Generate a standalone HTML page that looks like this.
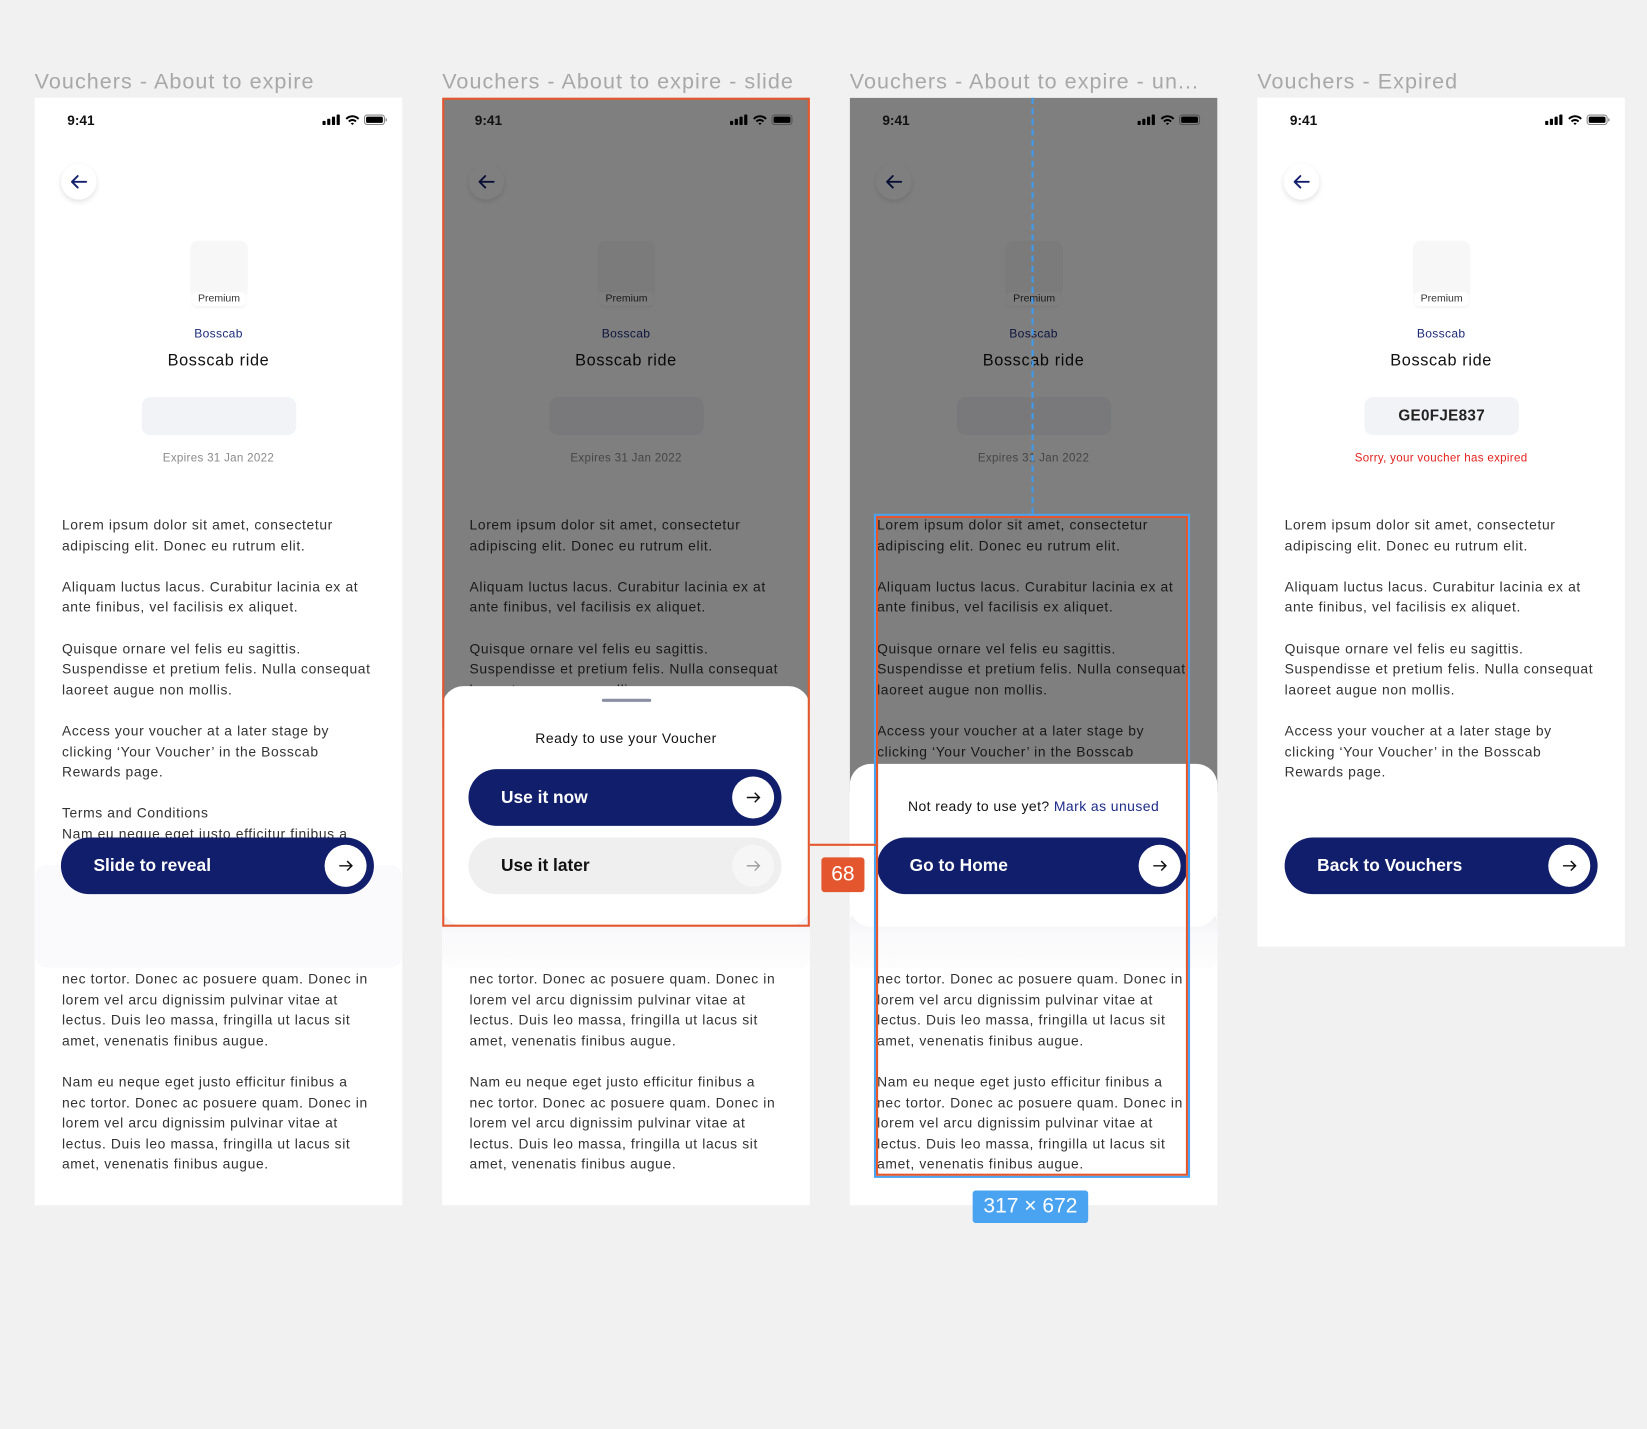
<!DOCTYPE html>
<html><head><meta charset="utf-8">
<style>
*{box-sizing:border-box;margin:0;padding:0}
html,body{width:1647px;height:1429px;overflow:hidden;background:#f1f1f1}
#w{position:absolute;left:0;top:0;width:1568px;height:1360px;transform:scale(1.05038,1.05074);transform-origin:0 0;font-family:"Liberation Sans",sans-serif;color:#222}
.title{position:absolute;top:66px;font-size:20.5px;color:#a8a8a8;white-space:nowrap;letter-spacing:1px}
.fr{position:absolute;top:93px;width:350px;background:#fff;overflow:hidden}
.abs{position:absolute}
.time{left:31px;top:14px;font-size:13px;font-weight:bold;color:#111}
.st{left:274px;top:15px}
.back{left:25px;top:63px;width:34px;height:34px;border-radius:50%;background:#fff;box-shadow:0 2px 5px rgba(0,0,0,.12)}
.back svg{position:absolute;left:8px;top:8px}
.ico{left:148px;top:136px;width:55px;height:55px;background:#f7f7f7;border-radius:8px}
.prem{left:148px;width:55px;top:183px;height:18px;text-align:center;font-size:10px;line-height:18px;color:#333}
.prem span{background:#fff;padding:1px 5px;border-radius:4px;box-shadow:0 2px 3px rgba(0,0,0,.05)}
.ctr{left:0;width:350px;text-align:center;white-space:nowrap}
.brand{top:219px;font-size:11.5px;color:#1c2a78;letter-spacing:.3px}
.name{top:242px;font-size:15.5px;color:#111;letter-spacing:.6px}
.box{left:102px;top:285px;width:147px;height:36px;background:#f2f3f6;border-radius:8px;text-align:center;line-height:36px;font-size:14.5px;font-weight:bold;color:#222;letter-spacing:.3px}
.exp{top:337px;font-size:11px;color:#8a8a8a;letter-spacing:.3px}
.txt{left:26px;font-size:13.2px;line-height:19.6px;color:#333;white-space:nowrap;letter-spacing:.6px}
.txt p{margin-bottom:19.6px}
.btn{height:54px;border-radius:27px;background:#111e6b;color:#fff;font-weight:bold;font-size:16.5px;line-height:54px;padding-left:31px}
.btn .c{position:absolute;right:7px;top:7px;width:40px;height:40px;border-radius:50%;background:#fff}
.btn .c svg{position:absolute;left:12px;top:12px}
.fade{left:0;width:350px;background:linear-gradient(#f0f0f4,#fafafc 40%,#fcfcfd);border-radius:10px}
.dim{left:0;top:0;width:350px;background:rgba(0,0,0,.5)}
</style></head><body><div id="w">

<div class="title" style="left:33px">Vouchers - About to expire</div>
<div class="title" style="left:421px">Vouchers - About to expire - slide</div>
<div class="title" style="left:809px">Vouchers - About to expire - un...</div>
<div class="title" style="left:1197px">Vouchers - Expired</div>

<!-- FRAME 1 -->
<div class="fr" style="left:33px;height:1054px">
 <div class="abs time">9:41</div>
 <svg class="abs st" width="62" height="12" viewBox="0 0 62 12"><rect x="0" y="7" width="3" height="4" rx=".8"/><rect x="4.5" y="5" width="3" height="6" rx=".8"/><rect x="9" y="3" width="3" height="8" rx=".8"/><rect x="13.5" y="1" width="3" height="10" rx=".8"/><path d="M22 4.5a9 9 0 0 1 13 0l-1.3 1.3a7.2 7.2 0 0 0-10.4 0z M24.5 7a5.5 5.5 0 0 1 8 0l-1.3 1.3a3.7 3.7 0 0 0-5.4 0z M27 9.5a2 2 0 0 1 3 0l-1.5 1.5z"/><rect x="40" y="1.5" width="19" height="9" rx="2.5" fill="none" stroke="#888" stroke-width="1"/><rect x="41.5" y="3" width="16" height="6" rx="1.5"/><rect x="60" y="4.5" width="1.3" height="3" rx=".6" fill="#888"/></svg>
 <div class="abs back"><svg width="18" height="18" viewBox="0 0 18 18"><path d="M16 9H3M8 3.5 2.5 9 8 14.5" fill="none" stroke="#111e6b" stroke-width="1.8" stroke-linecap="round" stroke-linejoin="round"/></svg></div>
 <div class="abs ico"></div><div class="abs prem"><span>Premium</span></div>
 <div class="abs ctr brand">Bosscab</div><div class="abs ctr name">Bosscab ride</div>
 <div class="abs box"></div><div class="abs ctr exp">Expires 31 Jan 2022</div>
 <div class="abs txt" style="top:397px">
  <p>Lorem ipsum dolor sit amet, consectetur<br>adipiscing elit. Donec eu rutrum elit.</p>
  <p>Aliquam luctus lacus. Curabitur lacinia ex at<br>ante finibus, vel facilisis ex aliquet.</p>
  <p>Quisque ornare vel felis eu sagittis.<br>Suspendisse et pretium felis. Nulla consequat<br>laoreet augue non mollis.</p>
  <p>Access your voucher at a later stage by<br>clicking ‘Your Voucher’ in the Bosscab<br>Rewards page.</p>
  Terms and Conditions<br>Nam eu neque eget justo efficitur finibus a
 </div>
 <div class="abs" style="left:0;width:350px;top:730px;height:98px;background:#fafafc;border-radius:12px"></div>
 <div class="abs btn" style="left:25px;top:704px;width:298px">Slide to reveal<div class="c"><svg width="16" height="16" viewBox="0 0 16 16"><path d="M2 8h12M9.5 3.5 14 8l-4.5 4.5" fill="none" stroke="#111" stroke-width="1.4"/></svg></div></div>
 <div class="abs txt" style="top:829px">nec tortor. Donec ac posuere quam. Donec in<br>lorem vel arcu dignissim pulvinar vitae at<br>lectus. Duis leo massa, fringilla ut lacus sit<br>amet, venenatis finibus augue.<br><br>Nam eu neque eget justo efficitur finibus a<br>nec tortor. Donec ac posuere quam. Donec in<br>lorem vel arcu dignissim pulvinar vitae at<br>lectus. Duis leo massa, fringilla ut lacus sit<br>amet, venenatis finibus augue.</div>
</div>

<!-- FRAME 2 -->
<div class="fr" style="left:421px;height:1054px">
 <div class="abs back"><svg width="18" height="18" viewBox="0 0 18 18"><path d="M16 9H3M8 3.5 2.5 9 8 14.5" fill="none" stroke="#111e6b" stroke-width="1.8" stroke-linecap="round" stroke-linejoin="round"/></svg></div>
 <div class="abs ico"></div><div class="abs prem"><span>Premium</span></div>
 <div class="abs ctr brand">Bosscab</div><div class="abs ctr name">Bosscab ride</div>
 <div class="abs box"></div><div class="abs ctr exp">Expires 31 Jan 2022</div>
 <div class="abs txt" style="top:397px">
  <p>Lorem ipsum dolor sit amet, consectetur<br>adipiscing elit. Donec eu rutrum elit.</p>
  <p>Aliquam luctus lacus. Curabitur lacinia ex at<br>ante finibus, vel facilisis ex aliquet.</p>
  <p>Quisque ornare vel felis eu sagittis.<br>Suspendisse et pretium felis. Nulla consequat<br>laoreet augue non mollis.</p>
 </div>
 <div class="abs dim" style="height:600px"></div>
 <div class="abs time">9:41</div>
 <svg class="abs st" width="62" height="12" viewBox="0 0 62 12"><rect x="0" y="7" width="3" height="4" rx=".8"/><rect x="4.5" y="5" width="3" height="6" rx=".8"/><rect x="9" y="3" width="3" height="8" rx=".8"/><rect x="13.5" y="1" width="3" height="10" rx=".8"/><path d="M22 4.5a9 9 0 0 1 13 0l-1.3 1.3a7.2 7.2 0 0 0-10.4 0z M24.5 7a5.5 5.5 0 0 1 8 0l-1.3 1.3a3.7 3.7 0 0 0-5.4 0z M27 9.5a2 2 0 0 1 3 0l-1.5 1.5z"/><rect x="40" y="1.5" width="19" height="9" rx="2.5" fill="none" stroke="#555" stroke-width="1"/><rect x="41.5" y="3" width="16" height="6" rx="1.5"/></svg>
 <div class="abs fade" style="top:775px;height:53px"></div>
 <div class="abs" style="left:0;top:560px;width:350px;height:228px;background:#fff;border-radius:20px"></div>
 <div class="abs" style="left:152px;top:572px;width:47px;height:3px;border-radius:2px;background:#8a8fa3"></div>
 <div class="abs ctr" style="top:602px;font-size:13.3px;color:#111;letter-spacing:.5px">Ready to use your Voucher</div>
 <div class="abs btn" style="left:25px;top:639px;width:298px">Use it now<div class="c"><svg width="16" height="16" viewBox="0 0 16 16"><path d="M2 8h12M9.5 3.5 14 8l-4.5 4.5" fill="none" stroke="#111" stroke-width="1.4"/></svg></div></div>
 <div class="abs btn" style="left:25px;top:704px;width:298px;background:#efefef;color:#111">Use it later<div class="c" style="background:#f6f6f6"><svg width="16" height="16" viewBox="0 0 16 16"><path d="M2 8h12M9.5 3.5 14 8l-4.5 4.5" fill="none" stroke="#999" stroke-width="1.2"/></svg></div></div>
 <div class="abs txt" style="top:829px">nec tortor. Donec ac posuere quam. Donec in<br>lorem vel arcu dignissim pulvinar vitae at<br>lectus. Duis leo massa, fringilla ut lacus sit<br>amet, venenatis finibus augue.<br><br>Nam eu neque eget justo efficitur finibus a<br>nec tortor. Donec ac posuere quam. Donec in<br>lorem vel arcu dignissim pulvinar vitae at<br>lectus. Duis leo massa, fringilla ut lacus sit<br>amet, venenatis finibus augue.</div>
</div>
<div class="abs" style="left:421px;top:93px;width:350px;height:789px;border:2px solid #e4572e"></div>

<!-- FRAME 3 -->
<div class="fr" style="left:809px;height:1054px">
 <div class="abs back"><svg width="18" height="18" viewBox="0 0 18 18"><path d="M16 9H3M8 3.5 2.5 9 8 14.5" fill="none" stroke="#111e6b" stroke-width="1.8" stroke-linecap="round" stroke-linejoin="round"/></svg></div>
 <div class="abs ico"></div><div class="abs prem"><span>Premium</span></div>
 <div class="abs ctr brand">Bosscab</div><div class="abs ctr name">Bosscab ride</div>
 <div class="abs box"></div><div class="abs ctr exp">Expires 31 Jan 2022</div>
 <div class="abs txt" style="top:397px">
  <p>Lorem ipsum dolor sit amet, consectetur<br>adipiscing elit. Donec eu rutrum elit.</p>
  <p>Aliquam luctus lacus. Curabitur lacinia ex at<br>ante finibus, vel facilisis ex aliquet.</p>
  <p>Quisque ornare vel felis eu sagittis.<br>Suspendisse et pretium felis. Nulla consequat<br>laoreet augue non mollis.</p>
  <p>Access your voucher at a later stage by<br>clicking ‘Your Voucher’ in the Bosscab<br>Rewards page.</p>
 </div>
 <div class="abs dim" style="height:660px"></div>
 <div class="abs time">9:41</div>
 <svg class="abs st" width="62" height="12" viewBox="0 0 62 12"><rect x="0" y="7" width="3" height="4" rx=".8"/><rect x="4.5" y="5" width="3" height="6" rx=".8"/><rect x="9" y="3" width="3" height="8" rx=".8"/><rect x="13.5" y="1" width="3" height="10" rx=".8"/><path d="M22 4.5a9 9 0 0 1 13 0l-1.3 1.3a7.2 7.2 0 0 0-10.4 0z M24.5 7a5.5 5.5 0 0 1 8 0l-1.3 1.3a3.7 3.7 0 0 0-5.4 0z M27 9.5a2 2 0 0 1 3 0l-1.5 1.5z"/><rect x="40" y="1.5" width="19" height="9" rx="2.5" fill="none" stroke="#555" stroke-width="1"/><rect x="41.5" y="3" width="16" height="6" rx="1.5"/></svg>
 <div class="abs fade" style="top:775px;height:53px"></div>
 <div class="abs" style="left:0;top:634px;width:350px;height:155px;background:#fff;border-radius:20px"></div>
 <div class="abs ctr" style="top:667px;font-size:13.3px;color:#111;letter-spacing:.4px">Not ready to use yet? <span style="color:#1c2a8a">Mark as unused</span></div>
 <div class="abs btn" style="left:26px;top:704px;width:296px">Go to Home<div class="c"><svg width="16" height="16" viewBox="0 0 16 16"><path d="M2 8h12M9.5 3.5 14 8l-4.5 4.5" fill="none" stroke="#111" stroke-width="1.4"/></svg></div></div>
 <div class="abs txt" style="top:829px">nec tortor. Donec ac posuere quam. Donec in<br>lorem vel arcu dignissim pulvinar vitae at<br>lectus. Duis leo massa, fringilla ut lacus sit<br>amet, venenatis finibus augue.<br><br>Nam eu neque eget justo efficitur finibus a<br>nec tortor. Donec ac posuere quam. Donec in<br>lorem vel arcu dignissim pulvinar vitae at<br>lectus. Duis leo massa, fringilla ut lacus sit<br>amet, venenatis finibus augue.</div>
</div>
<div class="abs" style="left:982px;top:93px;width:0;height:396px;border-left:2px dashed #3d9bf0"></div>
<div class="abs" style="left:832px;top:489px;width:301px;height:632px;border:2px solid #4aa3f0"></div>
<div class="abs" style="left:834px;top:491px;width:297px;height:628px;border:2px solid #e4572e"></div>
<div class="abs" style="left:771px;top:803px;width:63px;height:2px;background:#e4572e"></div>
<div class="abs" style="left:782px;top:816px;width:41px;height:33px;background:#e4572e;border-radius:3px;color:#fff;font-size:20px;text-align:center;line-height:33px">68</div>
<div class="abs" style="left:926px;top:1133px;width:110px;height:31px;background:#4aa3f0;border-radius:3px;color:#fff;font-size:20px;text-align:center;line-height:31px;white-space:nowrap">317 × 672</div>

<!-- FRAME 4 -->
<div class="fr" style="left:1197px;height:808px">
 <div class="abs time">9:41</div>
 <svg class="abs st" width="62" height="12" viewBox="0 0 62 12"><rect x="0" y="7" width="3" height="4" rx=".8"/><rect x="4.5" y="5" width="3" height="6" rx=".8"/><rect x="9" y="3" width="3" height="8" rx=".8"/><rect x="13.5" y="1" width="3" height="10" rx=".8"/><path d="M22 4.5a9 9 0 0 1 13 0l-1.3 1.3a7.2 7.2 0 0 0-10.4 0z M24.5 7a5.5 5.5 0 0 1 8 0l-1.3 1.3a3.7 3.7 0 0 0-5.4 0z M27 9.5a2 2 0 0 1 3 0l-1.5 1.5z"/><rect x="40" y="1.5" width="19" height="9" rx="2.5" fill="none" stroke="#888" stroke-width="1"/><rect x="41.5" y="3" width="16" height="6" rx="1.5"/><rect x="60" y="4.5" width="1.3" height="3" rx=".6" fill="#888"/></svg>
 <div class="abs back"><svg width="18" height="18" viewBox="0 0 18 18"><path d="M16 9H3M8 3.5 2.5 9 8 14.5" fill="none" stroke="#111e6b" stroke-width="1.8" stroke-linecap="round" stroke-linejoin="round"/></svg></div>
 <div class="abs ico"></div><div class="abs prem"><span>Premium</span></div>
 <div class="abs ctr brand">Bosscab</div><div class="abs ctr name">Bosscab ride</div>
 <div class="abs box">GE0FJE837</div><div class="abs ctr exp" style="color:#e3211c">Sorry, your voucher has expired</div>
 <div class="abs txt" style="top:397px">
  <p>Lorem ipsum dolor sit amet, consectetur<br>adipiscing elit. Donec eu rutrum elit.</p>
  <p>Aliquam luctus lacus. Curabitur lacinia ex at<br>ante finibus, vel facilisis ex aliquet.</p>
  <p>Quisque ornare vel felis eu sagittis.<br>Suspendisse et pretium felis. Nulla consequat<br>laoreet augue non mollis.</p>
  <p>Access your voucher at a later stage by<br>clicking ‘Your Voucher’ in the Bosscab<br>Rewards page.</p>
 </div>
 <div class="abs btn" style="left:26px;top:704px;width:298px">Back to Vouchers<div class="c"><svg width="16" height="16" viewBox="0 0 16 16"><path d="M2 8h12M9.5 3.5 14 8l-4.5 4.5" fill="none" stroke="#111" stroke-width="1.4"/></svg></div></div>
</div>

</div></body></html>
